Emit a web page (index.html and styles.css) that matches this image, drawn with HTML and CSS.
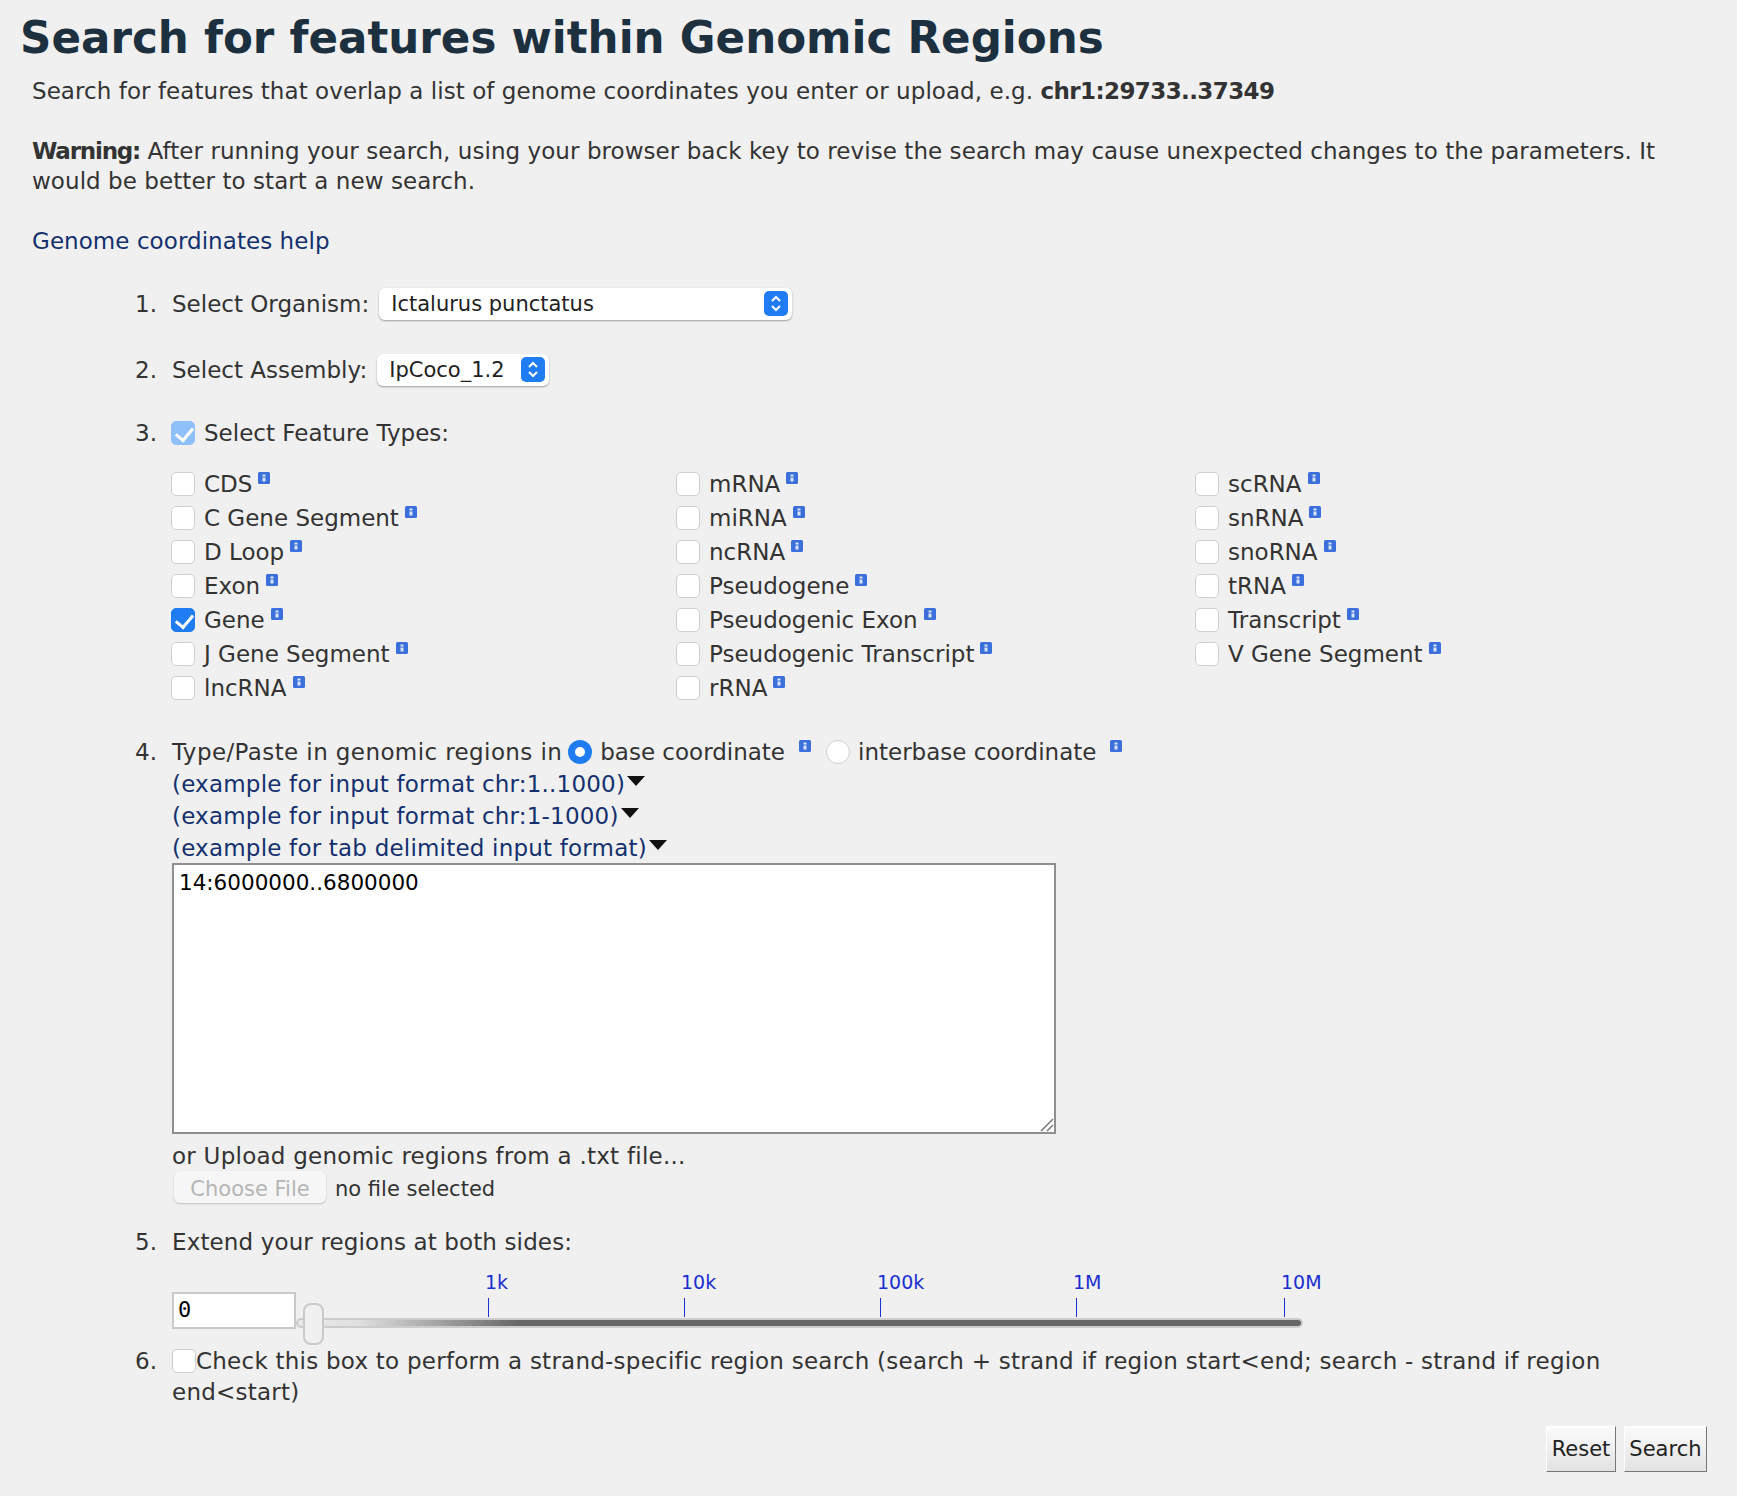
FILE: index.html
```html
<!DOCTYPE html>
<html lang="en">
<head>
    <meta charset="UTF-8">
    <title>Search for features within Genomic Regions</title>
    <link rel="stylesheet" href="styles.css">
</head>
<body>
<svg class="defs" width="0" height="0">
    <symbol id="info" viewBox="0 0 12 12">
        <rect width="12" height="12" rx="1.5" fill="#3b6fdc"/>
        <rect x="4.5" y="2.5" width="3" height="2" fill="#d8e4fa"/>
        <rect x="4.5" y="5.5" width="3" height="4" fill="#d8e4fa"/>
    </symbol>
    <symbol id="stepper" viewBox="0 0 24 25">
        <rect width="24" height="25" rx="5" fill="#1f7cf2"/>
        <path d="M8 10l4-4 4 4M8 15l4 4 4-4" fill="none" stroke="#fff" stroke-width="2"/>
    </symbol>
</svg>

<h1>Search for features within Genomic Regions</h1>
<div class="intro">
    <p>Search for features that overlap a list of genome coordinates you enter or upload, e.g. <b class="coords">chr1:29733..37349</b></p>
    <p><b class="warn">Warning:</b> After running your search, using your browser back key to revise the search may cause unexpected changes to the parameters. It would be better to start a new search.</p>
    <p><a href="#">Genome coordinates help</a></p>
</div>

<form class="steps">
    <div class="step step-organism">
        <span class="num">1.</span>
        <div class="inline">
            <label>Select Organism:</label>
            <div class="select select-organism">
                <select><option>Ictalurus punctatus</option></select>
                <svg class="stepper"><use href="#stepper"/></svg>
            </div>
        </div>
    </div>

    <div class="step step-assembly">
        <span class="num">2.</span>
        <div class="inline">
            <label>Select Assembly:</label>
            <div class="select select-assembly">
                <select><option>IpCoco_1.2</option></select>
                <svg class="stepper"><use href="#stepper"/></svg>
            </div>
        </div>
    </div>

    <div class="step step-types">
        <span class="num">3.</span>
        <div>
            <label class="check-label all"><input type="checkbox" class="faded" checked>Select Feature Types:</label>
            <div class="features">
                <label class="check-label"><input type="checkbox">CDS<svg class="info"><use href="#info"/></svg></label>
                <label class="check-label"><input type="checkbox">mRNA<svg class="info"><use href="#info"/></svg></label>
                <label class="check-label"><input type="checkbox">scRNA<svg class="info"><use href="#info"/></svg></label>
                <label class="check-label"><input type="checkbox">C Gene Segment<svg class="info"><use href="#info"/></svg></label>
                <label class="check-label"><input type="checkbox">miRNA<svg class="info"><use href="#info"/></svg></label>
                <label class="check-label"><input type="checkbox">snRNA<svg class="info"><use href="#info"/></svg></label>
                <label class="check-label"><input type="checkbox">D Loop<svg class="info"><use href="#info"/></svg></label>
                <label class="check-label"><input type="checkbox">ncRNA<svg class="info"><use href="#info"/></svg></label>
                <label class="check-label"><input type="checkbox">snoRNA<svg class="info"><use href="#info"/></svg></label>
                <label class="check-label"><input type="checkbox">Exon<svg class="info"><use href="#info"/></svg></label>
                <label class="check-label"><input type="checkbox">Pseudogene<svg class="info"><use href="#info"/></svg></label>
                <label class="check-label"><input type="checkbox">tRNA<svg class="info"><use href="#info"/></svg></label>
                <label class="check-label"><input type="checkbox" checked>Gene<svg class="info"><use href="#info"/></svg></label>
                <label class="check-label"><input type="checkbox">Pseudogenic Exon<svg class="info"><use href="#info"/></svg></label>
                <label class="check-label"><input type="checkbox">Transcript<svg class="info"><use href="#info"/></svg></label>
                <label class="check-label"><input type="checkbox">J Gene Segment<svg class="info"><use href="#info"/></svg></label>
                <label class="check-label"><input type="checkbox">Pseudogenic Transcript<svg class="info"><use href="#info"/></svg></label>
                <label class="check-label"><input type="checkbox">V Gene Segment<svg class="info"><use href="#info"/></svg></label>
                <label class="check-label"><input type="checkbox">lncRNA<svg class="info"><use href="#info"/></svg></label>
                <label class="check-label"><input type="checkbox">rRNA<svg class="info"><use href="#info"/></svg></label>
            </div>
        </div>
    </div>

    <div class="step step-regions">
        <span class="num">4.</span>
        <div>
            <div class="inline coord-line">
                <span class="coord-intro">Type/Paste in genomic regions in</span>
                <input type="radio" name="coord" checked>
                <span>base coordinate</span>
                <svg class="info info-base"><use href="#info"/></svg>
                <input type="radio" name="coord">
                <span>interbase coordinate</span>
                <svg class="info info-inter"><use href="#info"/></svg>
            </div>
            <div class="example"><a href="#">(example for input format chr:1..1000)</a><i class="arrow"></i></div>
            <div class="example"><a href="#">(example for input format chr:1-1000)</a><i class="arrow"></i></div>
            <div class="example"><a href="#">(example for tab delimited input format)</a><i class="arrow"></i></div>
            <div class="regions-box">
                <textarea class="regions">14:6000000..6800000</textarea>
                <svg class="grip" width="14" height="14" viewBox="0 0 14 14">
                    <path d="M1 13L13 1M7 13l6-6" fill="none" stroke="#777" stroke-width="1.5"/>
                </svg>
            </div>
            <div class="upload-label">or Upload genomic regions from a .txt file...</div>
            <div class="inline file-row">
                <button type="button" class="choose" disabled>Choose File</button>
                <span class="file-name">no file selected</span>
            </div>
        </div>
    </div>

    <div class="step step-extend">
        <span class="num">5.</span>
        <div class="extend-body">
            <div class="extend-label">Extend your regions at both sides:</div>
            <div class="slider">
                <input type="text" class="extend-value" value="0">
                <div class="scale">
                    <span class="tick" style="left: 192px"><b>1k</b></span>
                    <span class="tick" style="left: 388px"><b>10k</b></span>
                    <span class="tick" style="left: 584px"><b>100k</b></span>
                    <span class="tick" style="left: 780px"><b>1M</b></span>
                    <span class="tick" style="left: 988px"><b>10M</b></span>
                    <div class="track"></div>
                    <div class="handle"></div>
                </div>
            </div>
        </div>
    </div>

    <div class="step step-strand">
        <span class="num">6.</span>
        <div class="strand-text"><input type="checkbox" class="strand-box">Check this box to perform a strand-specific region search (search + strand if region start&lt;end; search - strand if region end&lt;start)</div>
    </div>

    <div class="actions">
        <button type="reset" class="btn">Reset</button>
        <button type="submit" class="btn">Search</button>
    </div>
</form>
</body>
</html>
```

FILE: styles.css
```css
* {
    box-sizing: border-box;
}

body {
    margin: 0;
    background: #f0f0f0;
    color: #333;
    font-family: "DejaVu Sans", sans-serif;
    font-size: 23px;
    line-height: 30px;
    min-height: 1496px;
}

.defs {
    position: absolute;
}

h1 {
    margin: 0;
    height: 76px;
    padding-left: 20px;
    color: #1c3040;
    font-size: 43.6px;
    line-height: 76px;
    font-weight: bold;
    white-space: nowrap;
}

a {
    color: #14306e;
    text-decoration: none;
}

.intro {
    padding: 0 32px;
}

.intro p {
    margin: 0 0 30px;
    letter-spacing: 0.06px;
}

.intro .coords {
    letter-spacing: -0.6px;
}

.intro .warn {
    letter-spacing: -1.2px;
}

.steps {
    padding-left: 135px;
    margin-top: 32px;
}

.step {
    display: grid;
    grid-template-columns: 37px 1fr;
}

.num {
    line-height: 30px;
}

.inline {
    display: flex;
    align-items: center;
}

.step-organism .num,
.step-assembly .num {
    line-height: 32px;
}

.step-assembly {
    margin-top: 34px;
}

.step-types {
    margin-top: 32px;
}

.step-regions {
    margin-top: 32px;
}

.step-extend {
    margin-top: 24px;
}

.step-strand {
    margin-top: 1px;
}

/* selects */
.select {
    position: relative;
    height: 32px;
    margin-left: 10px;
}

.select select {
    appearance: none;
    display: block;
    width: 100%;
    height: 32px;
    padding: 0 12px;
    border: 0;
    border-radius: 6px;
    background: #fff;
    box-shadow: 0 1px 2px rgba(0, 0, 0, 0.35);
    color: #222;
    font: 21px "DejaVu Sans", sans-serif;
}

.select-organism {
    width: 413px;
}

.select-assembly {
    width: 172px;
}

.stepper {
    position: absolute;
    top: 3px;
    right: 4px;
    width: 24px;
    height: 25px;
}

/* checkboxes */
input[type="checkbox"] {
    appearance: none;
    position: relative;
    flex: none;
    width: 24px;
    height: 24px;
    margin: 0 9px 0 -1px;
    border: 1px solid #cfcfcf;
    border-radius: 5px;
    background: #fff;
    vertical-align: -4px;
}

input[type="checkbox"]:checked {
    border-color: #1f7cf2;
    background: #1f7cf2;
}

input[type="checkbox"]:checked::after {
    content: "";
    position: absolute;
    left: 7px;
    top: 2px;
    width: 8px;
    height: 14px;
    border: solid #fff;
    border-width: 0 3px 3px 0;
    transform: rotate(40deg);
}

input.faded:checked {
    border-color: #8fc0fa;
    background: #8fc0fa;
}

.check-label {
    display: flex;
    align-items: center;
    height: 34px;
    white-space: nowrap;
}

.check-label.all {
    height: 30px;
}

.features {
    display: grid;
    grid-template-columns: 505px 519px 1fr;
    margin-top: 19px;
}

.info {
    width: 12px;
    height: 12px;
    margin: -12px 0 0 6px;
    flex: none;
}

/* regions */
.coord-line {
    height: 30px;
    margin-bottom: 1px;
    white-space: nowrap;
}

.coord-intro {
    letter-spacing: 0.4px;
}

input[type="radio"] {
    appearance: none;
    flex: none;
    width: 24px;
    height: 24px;
    margin: 0 8px 0 6px;
    border: 1px solid #cfcfcf;
    border-radius: 50%;
    background: #fff;
}

input[type="radio"]:checked {
    border: 7px solid #1f7cf2;
}

.info-base,
.info-inter {
    margin-left: 14px;
}

.info-base {
    margin-right: 9px;
}

.example {
    display: flex;
    align-items: center;
    height: 32px;
    letter-spacing: 0.2px;
    white-space: nowrap;
}

.arrow {
    width: 0;
    height: 0;
    margin: -6px 0 0 2px;
    border-left: 9px solid transparent;
    border-right: 9px solid transparent;
    border-top: 10px solid #111;
}

.regions-box {
    position: relative;
    width: 884px;
    margin-top: -1px;
}

.regions {
    display: block;
    width: 884px;
    height: 271px;
    margin: 0;
    padding: 3px 5px;
    border: 2px solid #8f8f8f;
    border-radius: 0;
    background: #fff;
    color: #000;
    font: 21.5px/30px "DejaVu Sans", sans-serif;
    outline: none;
    resize: none;
}

.grip {
    position: absolute;
    right: 2px;
    bottom: 2px;
}

.upload-label {
    margin-top: 7px;
    letter-spacing: 0.25px;
}

.file-row {
    height: 32px;
    margin-left: 2px;
}

.choose {
    width: 152px;
    height: 32px;
    padding: 3px 0 0;
    border: 0;
    border-radius: 6px;
    background: #f6f6f6;
    box-shadow: 0 1px 2px rgba(0, 0, 0, 0.2);
    color: #b5b5b5;
    font: 21px "DejaVu Sans", sans-serif;
}

.file-name {
    margin-left: 9px;
    padding-top: 3px;
    font-size: 21px;
}

/* slider */
.extend-label {
    letter-spacing: 0.13px;
}

.slider {
    display: flex;
    margin-top: 35px;
    height: 53px;
}

.extend-value {
    width: 124px;
    height: 37px;
    padding: 0 4px 3px;
    border: 2px solid #c9c9c9;
    background: #fff;
    color: #000;
    font: 500 22px "DejaVu Sans Mono", monospace;
    outline: none;
}

.scale {
    position: relative;
    width: 1007px;
}

.track {
    position: absolute;
    left: 0;
    right: 0;
    top: 26px;
    height: 10px;
    border: 2px solid #ccc;
    border-radius: 5px;
    background: linear-gradient(to right, #e8e8e8 0, #e0e0e0 6%, #666 22%, #666 100%);
}

.handle {
    position: absolute;
    left: 7px;
    top: 11px;
    width: 21px;
    height: 42px;
    border: 2px solid #c9c9c9;
    border-radius: 8px;
    background: #f0f0f0;
}

.tick {
    position: absolute;
    top: 6px;
    width: 1px;
    height: 19px;
    background: #1a2fd0;
}

.tick b {
    position: absolute;
    left: -3px;
    top: -30px;
    color: #1a2fd0;
    font-size: 19px;
    font-weight: normal;
    line-height: 28px;
    white-space: nowrap;
}

/* strand */
.strand-box {
    margin: 0 !important;
}

.strand-text {
    width: 1450px;
    line-height: 31px;
    letter-spacing: 0.24px;
}

/* buttons */
.actions {
    display: flex;
    justify-content: flex-end;
    gap: 8px;
    width: 1572px;
    margin-top: 18px;
}

.btn {
    height: 46px;
    padding: 0 4.5px;
    border: 1px solid;
    border-color: #fff #777 #777 #fff;
    background: linear-gradient(to bottom, #fbfbfb, #e2e2e2);
    color: #222;
    font: 21px "DejaVu Sans", sans-serif;
}
```
